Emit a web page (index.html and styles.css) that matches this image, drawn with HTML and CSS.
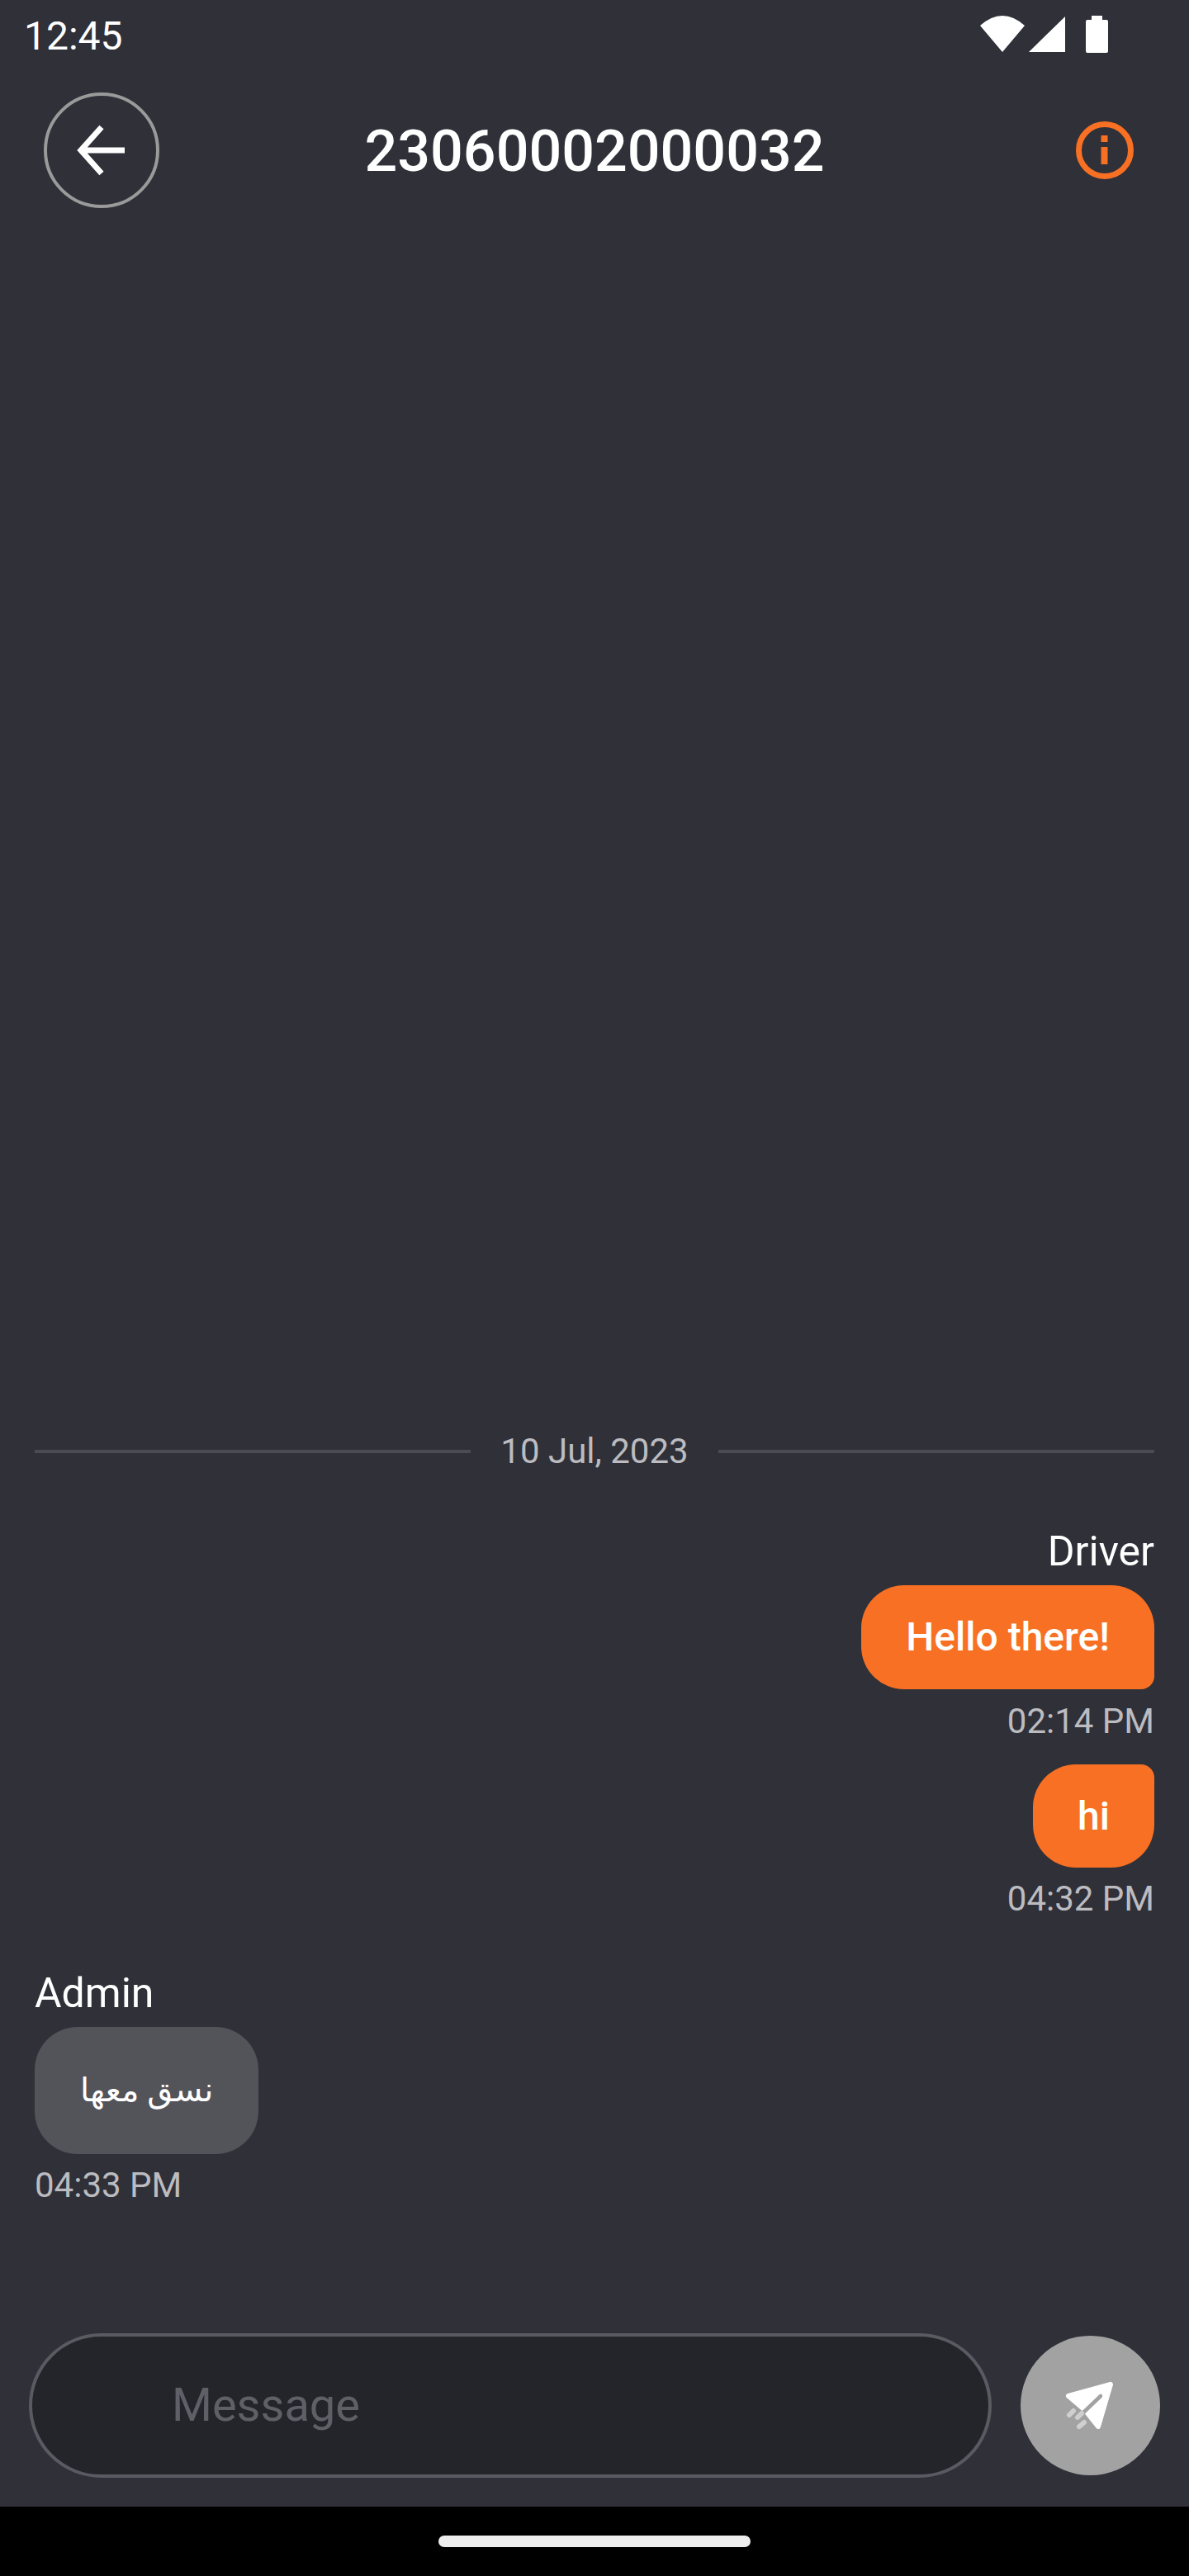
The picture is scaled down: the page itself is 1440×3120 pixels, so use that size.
FILE: index.html
```html
<!DOCTYPE html>
<html lang="en">
<head>
    <meta charset="UTF-8">
    <meta name="viewport" content="width=device-width, initial-scale=1.0">
    <title>23060002000032</title>
    <link rel="stylesheet" href="styles.css">
</head>
<body>
    <div class="app">
        <div class="status-bar">
            <span class="clock">12:45</span>
            <div class="status-icons">
                <svg class="wifi" width="54" height="44" viewBox="0 0 54 44"><path d="M0 12Q27-12 54 12L27 44Z" fill="#fff"/></svg>
                <svg class="signal" width="44" height="44" viewBox="0 0 44 44"><path d="M44 1V44H0Z" fill="#fff"/></svg>
                <svg class="battery" width="27" height="45" viewBox="0 0 27 45"><path d="M7 0H20V5H25Q27 5 27 7V43Q27 45 25 45H2Q0 45 0 43V7Q0 5 2 5H7Z" fill="#fff"/></svg>
            </div>
        </div>

        <div class="header">
            <button class="back-btn">
                <svg width="132" height="132" viewBox="0 0 132 132"><path d="M94 66H41M66 38L41 66L66 94" fill="none" stroke="#fff" stroke-width="7"/></svg>
            </button>
            <h1 class="title">23060002000032</h1>
            <svg class="info" width="70" height="70" viewBox="0 0 70 70">
                <circle cx="35" cy="35" r="31.5" fill="none" stroke="#f87023" stroke-width="7"/>
                <path d="M30.5 17H38.5V25H30.5ZM30.5 31H38.5V52H30.5Z" fill="#f87023"/>
            </svg>
        </div>

        <div class="chat">
            <div class="date-row">
                <span class="date-line"></span>
                <span class="date-text">10 Jul, 2023</span>
                <span class="date-line"></span>
            </div>

            <div class="msg msg-out first">
                <div class="sender">Driver</div>
                <div class="bubble bubble-out tail-bottom">Hello there!</div>
                <div class="time time-gap">02:14 PM</div>
            </div>
            <div class="msg msg-out next">
                <div class="bubble bubble-out bubble-short tail-top">hi</div>
                <div class="time">04:32 PM</div>
            </div>

            <div class="msg msg-in">
                <div class="sender">Admin</div>
                <div class="bubble bubble-in" dir="rtl" lang="ar">نسق معها</div>
                <div class="time">04:33 PM</div>
            </div>
        </div>

        <div class="composer">
            <div class="message-box">Message</div>
            <button class="send-btn">
                <svg width="169" height="169" viewBox="0 0 169 169">
                    <path d="M58 73L109 59L94 110L78 90Z" fill="#fff" stroke="#fff" stroke-width="6" stroke-linejoin="round"/>
                    <path d="M97 73L74 95" fill="none" stroke="#a2a2a2" stroke-width="4.5" stroke-linecap="round"/>
                    <path d="M59 96L64 91M69 99L74 94M71 110L77 105" fill="none" stroke="#cfcfcf" stroke-width="6" stroke-linecap="round"/>
                </svg>
            </button>
        </div>

        <div class="nav-bar">
            <span class="nav-handle"></span>
        </div>
    </div>
</body>
</html>
```

FILE: styles.css
```css
* {
    box-sizing: border-box;
}
body {
    margin: 0;
    background-color: #2f3038;
    font-family: Roboto, "DejaVu Sans", sans-serif;
    color: #fff;
}
.app {
    display: flex;
    flex-direction: column;
    height: 3120px;
}
.status-bar {
    display: flex;
    justify-content: space-between;
    height: 112px;
    padding: 20px 98px 0 29px;
}
.clock {
    font-size: 48px;
    line-height: 48px;
}
.status-icons {
    display: flex;
    align-items: flex-start;
    margin-top: -1px;
}
.signal {
    margin-left: 5px;
}
.battery {
    margin-left: 25px;
}
.header {
    display: grid;
    grid-template-columns: 1fr auto 1fr;
    align-items: center;
    height: 140px;
}
.back-btn {
    width: 140px;
    height: 140px;
    margin-left: 53px;
    padding: 0;
    background: none;
    border: 4px solid #9a9a9a;
    border-radius: 50%;
}
.back-btn svg {
    display: block;
}
.title {
    margin: 0;
    padding-top: 2px;
    font-size: 70px;
    line-height: 84px;
    font-weight: 500;
}
.info {
    justify-self: end;
    margin-right: 67px;
}
.chat {
    flex: 1;
    display: flex;
    flex-direction: column;
    justify-content: flex-end;
    padding: 0 42px 154px;
}
.date-row {
    display: flex;
    align-items: center;
    gap: 36px;
}
.date-line {
    flex: 1;
    height: 4px;
    background-color: #4a4b53;
}
.date-text {
    font-size: 42px;
    line-height: 50px;
    color: #bcbcc0;
}
.msg {
    display: flex;
    flex-direction: column;
}
.msg-out {
    align-items: flex-end;
}
.msg-in {
    align-items: flex-start;
    margin-top: 61px;
}
.first {
    margin-top: 68px;
}
.next {
    margin-top: 27px;
}
.sender {
    font-size: 50px;
    line-height: 56px;
    margin-bottom: 13px;
}
.bubble {
    font-size: 48px;
}
.bubble-out {
    height: 126px;
    padding: 0 54px;
    line-height: 126px;
    font-weight: 500;
    background-color: #f87023;
    border-radius: 52px;
}
.bubble-short {
    height: 125px;
    line-height: 125px;
}
.tail-bottom {
    border-bottom-right-radius: 16px;
}
.tail-top {
    border-top-right-radius: 16px;
}
.bubble-in {
    height: 154px;
    padding: 0 55px;
    font-size: 40px;
    line-height: 154px;
    background-color: #53545a;
    border-radius: 52px;
}
.time {
    margin-top: 13px;
    font-size: 42px;
    line-height: 50px;
    color: #bcbcc0;
}
.time-gap {
    margin-top: 14px;
}
.composer {
    display: flex;
    align-items: center;
    gap: 35px;
    height: 210px;
    padding: 0 35px 35px;
}
.message-box {
    flex: 1;
    height: 175px;
    padding-left: 169px;
    font-size: 56px;
    line-height: 167px;
    color: #5f6067;
    background-color: #24242b;
    border: 4px solid #5a5b62;
    border-radius: 88px;
}
.send-btn {
    width: 169px;
    height: 169px;
    padding: 0;
    background-color: #a2a2a2;
    border: none;
    border-radius: 50%;
}
.send-btn svg {
    display: block;
}
.nav-bar {
    display: flex;
    justify-content: center;
    height: 84px;
    padding-top: 35px;
    background-color: #000;
}
.nav-handle {
    width: 378px;
    height: 14px;
    background-color: #eee;
    border-radius: 7px;
}
```
